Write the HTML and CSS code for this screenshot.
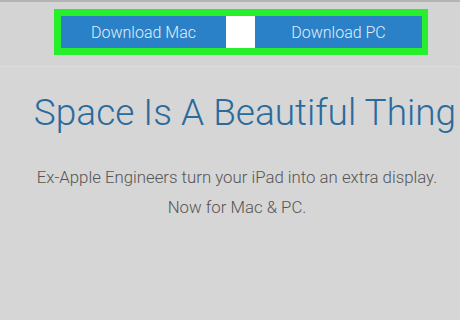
FILE: index.html
```html
<!DOCTYPE html>
<html lang="en">
<head>
    <meta charset="UTF-8">
    <meta name="viewport" content="width=device-width, initial-scale=1.0">
    <title>Space Is A Beautiful Thing</title>
    <link rel="stylesheet" href="styles.css">
</head>
<body>
    <!-- Top bar with download buttons -->
    <div class="topbar">
        <div class="download-box">
            <a href="#" class="btn-download btn-mac">Download Mac</a>
            <span class="spacer"></span>
            <a href="#" class="btn-download btn-pc">Download PC</a>
        </div>
    </div>

    <!-- Hero -->
    <div class="hero">
        <h1>Space Is A Beautiful Thing</h1>
        <p>Ex-Apple Engineers turn your iPad into an extra display.</p>
        <p>Now for Mac &amp; PC.</p>
    </div>
</body>
</html>
```
FILE: styles.css
```css
/* General Page Styling */
body {
    font-family: 'Roboto', 'Liberation Sans', sans-serif;
    margin: 0;
    padding: 0;
    background-color: #d6d6d6;
    overflow: hidden;
}

/* Top Bar */
.topbar {
    height: 67px;
    border-top: 2px solid #b4b4b4;
    border-bottom: 1px solid #dcdcdc;
    background-color: #d4d4d4;
    padding-top: 7px;
    padding-left: 54px;
    box-sizing: border-box;
}

.download-box {
    display: flex;
    width: 361px;
    border: 7px solid #27ef2c;
    border-right-width: 6px;
}

.btn-download {
    display: flex;
    align-items: center;
    justify-content: center;
    height: 32px;
    background-color: #2a81c7;
    color: #e4eef8;
    font-size: 16px;
    font-weight: 300;
    text-decoration: none;
}

.btn-mac { width: 165px; }
.btn-pc { width: 167px; }

.spacer {
    width: 29px;
    background-color: #ffffff;
}

/* Hero */
.hero {
    text-align: center;
    padding-left: 14px;
}

.hero h1 {
    margin: 24px 0 28px 0;
    padding-left: 16px;
    font-size: 37px;
    font-weight: 300;
    color: #2a6a9c;
    white-space: nowrap;
}

.hero p {
    margin: 0;
    font-size: 16.8px;
    font-weight: 300;
    line-height: 30px;
    color: #555555;
}
```
